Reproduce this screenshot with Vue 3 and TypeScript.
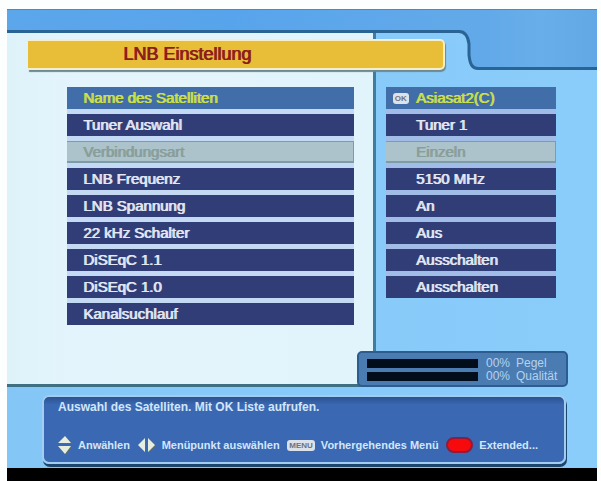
<script setup lang="ts">
import { ref } from 'vue'

interface Setting {
  label: string
  value?: string
  disabled?: boolean
}

interface Signal {
  name: string
  percent: number
}

const settings: Setting[] = [
  { label: 'Name des Satelliten', value: 'Asiasat2(C)' },
  { label: 'Tuner Auswahl', value: 'Tuner 1' },
  { label: 'Verbindungsart', value: 'Einzeln', disabled: true },
  { label: 'LNB Frequenz', value: '5150 MHz' },
  { label: 'LNB Spannung', value: 'An' },
  { label: '22 kHz Schalter', value: 'Aus' },
  { label: 'DiSEqC 1.1', value: 'Ausschalten' },
  { label: 'DiSEqC 1.0', value: 'Ausschalten' },
  { label: 'Kanalsuchlauf' },
]

const signals: Signal[] = [
  { name: 'Pegel', percent: 0 },
  { name: 'Qualität', percent: 0 },
]

const selected = ref(0)

const twoDigits = (n: number): string => String(n).padStart(2, '0') + '%'
</script>

<template>
  <div class="screen">
    <div class="band" aria-hidden="true">
      <div class="band-low"></div>
      <svg class="band-curve" width="30" height="62" viewBox="0 0 30 62">
        <path class="band-fill" d="M0 0H30V59H22C16 58 14 55 14 48V36C14 26 10 22 0 22Z" />
        <path class="band-top" d="M0 0H30V1H0Z" />
        <path class="band-line" d="M0 22.5H4C10 22.5 13 27 14 35V46C15 55 17 59.5 23 59.5H30" />
      </svg>
      <div class="band-high"></div>
    </div>

    <main class="body">
      <section class="page">
        <h1 class="title">LNB Einstellung</h1>
        <div class="rows labels">
          <button
            v-for="(item, i) in settings"
            :key="item.label"
            type="button"
            class="row"
            :class="{ active: i === selected }"
            :disabled="item.disabled"
            @click="selected = i"
          >{{ item.label }}</button>
        </div>
      </section>

      <section class="side">
        <div class="rows values">
          <template v-for="(item, i) in settings" :key="item.label">
            <button
              v-if="item.value"
              type="button"
              class="row value"
              :class="{ active: i === selected }"
              :disabled="item.disabled"
              @click="selected = i"
            >
              <span class="mark"><span v-if="i === selected" class="key">OK</span></span>
              <span>{{ item.value }}</span>
            </button>
          </template>
        </div>

        <div class="signal">
          <div v-for="s in signals" :key="s.name" class="signal-row">
            <div class="track" role="meter" :aria-label="s.name" :aria-valuenow="s.percent" aria-valuemin="0" aria-valuemax="100">
              <div class="level" :style="{ width: s.percent + '%' }"></div>
            </div>
            <span class="percent">{{ twoDigits(s.percent) }}</span>
            <span class="signal-name">{{ s.name }}</span>
          </div>
        </div>
      </section>
    </main>

    <footer class="help">
      <p class="hint">Auswahl des Satelliten. Mit OK Liste aufrufen.</p>
      <div class="keys">
        <span class="item">
          <svg width="14" height="20" viewBox="0 0 14 20" aria-hidden="true">
            <path class="shade" d="M1 9H14L8 2ZM1 12H14L8 20Z" />
            <path class="arrow" d="M0 8H13L7 1ZM0 11H13L7 19Z" />
          </svg>
          <span>Anwählen</span>
        </span>
        <span class="item">
          <svg width="18" height="16" viewBox="0 0 18 16" aria-hidden="true">
            <path class="shade" d="M8 2V16L1 9ZM11 2V16L18 9Z" />
            <path class="arrow" d="M7 1V15L0 8ZM10 1V15L17 8Z" />
          </svg>
          <span>Menüpunkt auswählen</span>
        </span>
        <span class="item">
          <span class="key">MENU</span>
          <span>Vorhergehendes Menü</span>
        </span>
        <span class="item">
          <span class="red"></span>
          <span>Extended...</span>
        </span>
      </div>
    </footer>

    <div class="bottom"></div>
  </div>
</template>

<style>
body {
  margin: 0;
  background: #fdfefe;
}
</style>

<style scoped>
.screen {
  display: flex;
  flex-direction: column;
  box-sizing: border-box;
  min-height: calc(100vh - 9px);
  margin: 9px 4px 0 7px;
  background: linear-gradient(90deg, #84c6f6, #8accfa);
  font-family: "Liberation Sans", Arial, sans-serif;
  font-weight: bold;
}

.band {
  display: flex;
  align-items: flex-start;
  height: 24px;
}

.band-low {
  flex: 1;
  height: 20px;
  background: linear-gradient(90deg, #5ca6ea, #58a4ec 50%, #62a9e9);
  border-top: 1px solid #4a8ac0;
  border-bottom: 3px solid #2a6494;
}

.band-curve {
  flex: none;
}

.band-fill {
  fill: #62a9e9;
}

.band-top {
  fill: #4a8ac0;
}

.band-line {
  fill: none;
  stroke: #2a6494;
  stroke-width: 3;
}

.band-high {
  width: 19%;
  height: 57px;
  background: linear-gradient(90deg, #62a9e9, #68aeea 50%, #62a8e6);
  border-top: 1px solid #4a8ac0;
  border-bottom: 3px solid #2a6494;
}

.body {
  display: flex;
}

.page {
  flex: 0 0 62%;
  box-sizing: content-box;
  padding-bottom: 59px;
  background: linear-gradient(90deg, #def2fa, #e4f4fc 20%, #e2f4fb);
  border-right: 3px solid #3d7da0;
  border-bottom: 3px solid #3f6f82;
  border-radius: 0 0 8px 0;
}

.title {
  position: relative;
  box-sizing: border-box;
  height: 31px;
  margin: 6px -72px 0 21px;
  padding-left: 95px;
  background: #e8be38;
  border: 2px solid #f6eec8;
  border-left: 0;
  border-radius: 0 5px 5px 0;
  box-shadow: 1px 2px 1px #6c8a90;
  color: #8c1c1c;
  font-size: 18px;
  font-weight: normal;
  line-height: 27px;
  text-shadow: 1px 0 0 #8c1c1c;
}

.rows {
  display: grid;
  gap: 5px;
}

.labels {
  margin: 17px 19px 0 60px;
  background: #c4daf4;
}

.values {
  background: #a2bce8;
}

.row {
  box-sizing: border-box;
  height: 22px;
  padding: 0 16px;
  border: 0;
  background: #313d76;
  color: #e2e8f4;
  font: 15px/22px "Liberation Sans", Arial, sans-serif;
  text-align: left;
  text-shadow: 1px 0 0 #e2e8f4;
  white-space: nowrap;
}

.row.active {
  background: #416ea8;
  color: #cfe048;
  text-shadow: 1px 0 0 #cfe048;
}

.row:disabled {
  background: #adc3cb;
  border: 1px solid #7c9caa;
  border-left-width: 0;
  border-bottom-width: 2px;
  color: #899e9a;
  line-height: 19px;
  text-shadow: 1px 0 0 #899e9a;
}

.row.value {
  display: flex;
  padding: 0;
}

.mark {
  display: flex;
  flex: 0 0 30px;
  align-items: center;
  justify-content: center;
  align-self: stretch;
}

.side {
  display: flex;
  flex: 1;
  flex-direction: column;
  box-sizing: border-box;
  padding: 54px 41px 0 10px;
}

.signal {
  position: relative;
  display: grid;
  gap: 1px;
  box-sizing: border-box;
  margin: auto -12px 0 -29px;
  padding: 4px 7px 3px 8px;
  background: #4a7cb2;
  border: 2px solid #2c5c90;
  border-radius: 5px;
}

.signal-row {
  display: flex;
  align-items: center;
  color: #b4d2ee;
  font-size: 12px;
  font-weight: normal;
  line-height: 12px;
}

.track {
  flex: 1;
  height: 9px;
  background: #020d1c;
}

.level {
  height: 100%;
  background: #e8be38;
}

.percent {
  width: 30px;
  margin-left: 8px;
}

.signal-name {
  width: 43px;
}

.help {
  box-sizing: border-box;
  margin: 8px 31px 0 35px;
  padding: 3px 12px 5px 14px;
  background: linear-gradient(#2b5291, #3a68b2 12%, #3a68b2);
  border: 2px solid #a2cdf0;
  border-radius: 7px;
  box-shadow: 1px 3px 0 #1d466e;
  color: #d2e6fa;
  font-size: 11px;
  line-height: 14px;
}

.hint {
  margin: 0;
  font-size: 12px;
}

.keys {
  display: flex;
  justify-content: space-between;
  margin-top: 19px;
  padding-right: 14px;
  white-space: nowrap;
}

.item {
  display: flex;
  align-items: center;
  gap: 6px;
  height: 24px;
}

.arrow {
  fill: #e6eee0;
}

.shade {
  fill: #5a6e68;
}

.key {
  padding: 0 2px;
  background: #dce2ea;
  border-radius: 3px;
  color: #6c7280;
  font-size: 8px;
  font-weight: bold;
  line-height: 11px;
  text-shadow: none;
}

.red {
  box-sizing: border-box;
  width: 27px;
  height: 16px;
  background: #f60a0c;
  border: 2px solid #8c1c40;
  border-radius: 8px;
}

.bottom {
  flex: 1;
  min-height: 14px;
  margin-top: 4px;
  background: #000;
}
</style>
